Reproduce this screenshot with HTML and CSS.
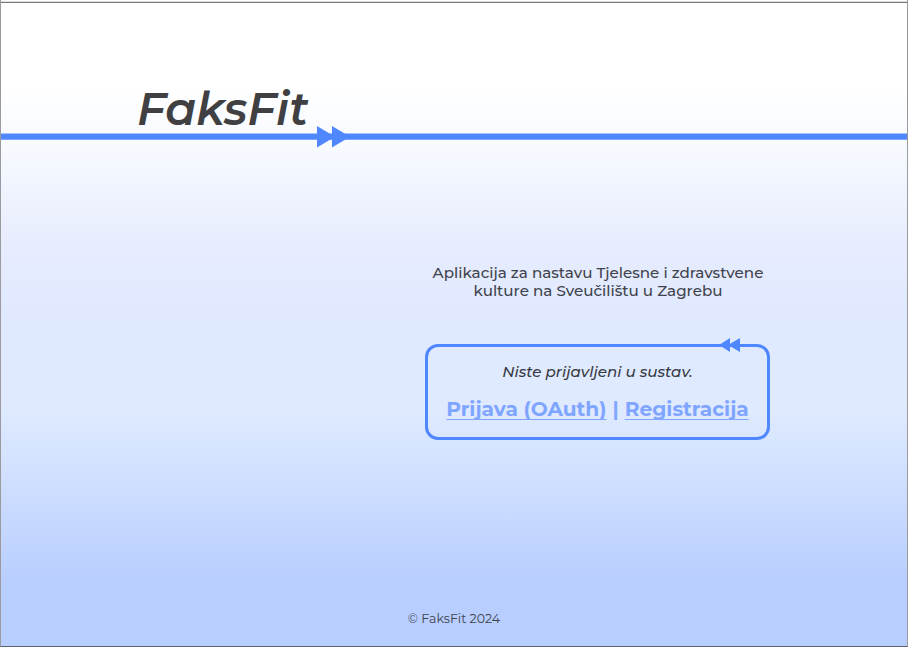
FILE: index.html
```html
<!DOCTYPE html>
<html lang="hr">
<head>
<meta charset="utf-8">
<title>FaksFit</title>
<link rel="stylesheet" href="styles.css">
</head>
<body>
<div class="page">
  <header class="header">
    <h1 class="logo">FaksFit</h1>
    <div class="rule">
      <svg class="rule-arrows" width="33" height="22" viewBox="0 0 33 22"><path d="M0 0L18 10.7L0 21.4ZM15 0L33 10.7L15 21.4Z"/></svg>
    </div>
  </header>
  <main class="main">
    <p class="intro">Aplikacija za nastavu Tjelesne i zdravstvene<br>kulture na Sveučilištu u Zagrebu</p>
    <section class="card">
      <svg class="card-arrows" width="21" height="14" viewBox="0 0 21 14"><path d="M11 0L0 7L11 14ZM21 0L9 7L21 14Z"/></svg>
      <p class="status">Niste prijavljeni u sustav.</p>
      <p class="links"><a href="#">Prijava (OAuth)</a><span>|</span><a href="#">Registracija</a></p>
    </section>
  </main>
  <footer class="footer">© FaksFit 2024</footer>
</div>
</body>
</html>
```
FILE: styles.css
```css
* { box-sizing: border-box; }
body {
  margin: 0;
  color: #40434c;
  font-family: Montserrat, Inter, sans-serif;
  background: #fff;
}
.page {
  display: flex;
  flex-direction: column;
  height: 647px;
  padding-top: 2px;
  background: linear-gradient(180deg, #fff 0, #fff 85px, #f7faff 145px, #e8edfe 240px, #e0e9ff 310px, #dfeaff 410px, #b8ceff 585px);
  border: 1px solid #9b9b9f;
  border-top: 0;
  border-bottom-color: #5d6270;
  box-shadow: inset 0 1px #fff, inset 0 2px #dedede, inset 0 3px #77757a;
  position: relative;
}
.header { height: 138px; }
.logo {
  margin: 0;
  padding: 79px 0 0 136px;
  height: 131px;
  font-size: 45.3px;
  line-height: 56px;
  font-style: italic;
  font-weight: 600;
  color: #404042;
}
.rule {
  position: relative;
  height: 7px;
  background: #4f87ff;
  border-top: 1px solid #a6c3ff;
  border-bottom: 1px solid #7ba5ff;
}
.rule-arrows { position: absolute; left: 315.8px; top: -8px; fill: #4f87ff; }
.main { width: 345px; margin-left: 424px; flex: 1; }
.intro {
  margin: 124px 0 0;
  padding-left: 1px;
  text-align: center;
  font-size: 15.15px;
  font-weight: 500;
  line-height: 18px;
  white-space: nowrap;
}
.card {
  position: relative;
  height: 96px;
  margin-top: 44px;
  padding-top: 15px;
  border: 3px solid #4f87ff;
  border-radius: 13px;
  text-align: center;
  white-space: nowrap;
}
.card-arrows { position: absolute; right: 27.5px; top: -9px; fill: #4f87ff; }
.status { margin: 0; font-size: 15.1px; font-weight: 500; line-height: 20px; font-style: italic; color: #383b44; }
.links {
  display: flex;
  justify-content: center;
  gap: 6px;
  margin: 14px 0 0;
  font-size: 20.15px;
  line-height: 26px;
  font-weight: 700;
  color: #7ea5ff;
}
.links a { color: inherit; text-underline-offset: 3px; text-decoration-thickness: 1px; text-decoration-skip-ink: none; }
.footer { height: 37px; text-align: center; font-size: 12.6px; line-height: 20px; }
```
